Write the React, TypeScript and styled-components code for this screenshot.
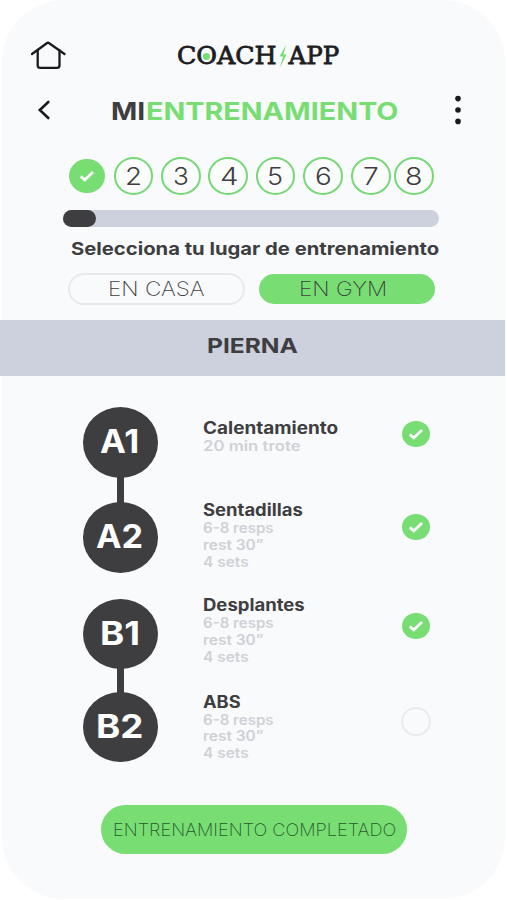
import React, { useLayoutEffect, useRef, useState } from "react";
import styled, { createGlobalStyle } from "styled-components";

const ink = "#3e3e40";
const green = "#78de74";
const lavender = "#cdd0dd";

const GlobalStyle = createGlobalStyle`
  * { box-sizing: border-box; }
  body { margin: 0; background: #fff; font-family: Inter, "Open Sans", sans-serif; color: ${ink}; }
  button { font: inherit; color: inherit; background: none; border: 0; padding: 0; }
  svg { display: block; }
`;

const FitBox = styled.span<{ $width: number }>`
  display: block;
  flex: none;
  width: ${(p) => p.$width}px;
  white-space: nowrap;
  text-align: left;
`;

const FitInner = styled.span`
  display: inline-block;
  vertical-align: top;
  transform-origin: left center;
`;

/* Stretches a line of text horizontally so that it takes a given width. */
function Fit({ width, children }: { width: number; children: React.ReactNode }) {
  const ref = useRef<HTMLSpanElement>(null);
  const [scale, setScale] = useState(1);
  useLayoutEffect(() => {
    if (ref.current) setScale(width / ref.current.offsetWidth);
  }, [width]);
  return (
    <FitBox $width={width}>
      <FitInner ref={ref} style={{ transform: `scaleX(${scale})` }}>
        {children}
      </FitInner>
    </FitBox>
  );
}

const Phone = styled.main`
  width: 503px;
  height: 899px;
  margin-left: 2px;
  border-radius: 62px;
  background: #f9fafc;
  display: flex;
  flex-direction: column;
`;

const TopBar = styled.header`
  height: 80px;
  padding: 40px 0 0 28px;
  display: flex;
  align-items: flex-start;
`;

const Logo = styled.div`
  display: flex;
  align-items: center;
  margin: 1px 0 0 109.5px;
  height: 30px;
  font: 400 24.5px/30px "DejaVu Serif", serif;
  color: #1d1d1f;
  -webkit-text-stroke: 0.8px #1d1d1f;
`;

const LetterO = styled.span`
  position: relative;
  &::after {
    content: "";
    position: absolute;
    left: calc(50% - 3.5px);
    top: calc(50% - 3px);
    width: 7px;
    height: 7px;
    border-radius: 50%;
    background: ${green};
  }
`;

const TitleBar = styled.div`
  height: 60px;
  padding: 0 43px 0 34px;
  display: flex;
  align-items: center;
`;

const Title = styled.h1`
  margin: 1px 0 0 60px;
  font-size: 24.5px;
  line-height: 30px;
  font-weight: 700;
  display: flex;
`;

const Accent = styled.span`
  color: ${green};
`;

const MoreButton = styled.button`
  margin-left: auto;
`;

const Steps = styled.nav`
  height: 70px;
  padding: 17px 0 0 66px;
  display: flex;
`;

const Step = styled.button<{ $gap: number; $done?: boolean; $shift?: number }>`
  flex: none;
  width: ${(p) => (p.$done ? 36 : 39.6)}px;
  height: ${(p) => (p.$done ? 34.5 : 37.5)}px;
  margin: ${(p) => (p.$done ? 1.5 : 0)}px 0 0 ${(p) => p.$gap}px;
  padding-left: ${(p) => p.$shift ?? 0}px;
  border-radius: 50%;
  border: ${(p) => (p.$done ? "0" : `2px solid #76d876`)};
  background: ${(p) => (p.$done ? green : "#fafdfc")};
  display: flex;
  align-items: center;
  justify-content: center;
  font-size: 24.5px;
  font-weight: 300;
  line-height: 30px;
`;

const Track = styled.div`
  flex: none;
  width: 376px;
  height: 17px;
  margin-left: 61px;
  border-radius: 9px;
  background: ${lavender};
`;

const Thumb = styled.div`
  width: 32.5px;
  height: 17px;
  border-radius: 9px;
  background: ${ink};
`;

const Prompt = styled.h2`
  margin: 11px 0 0 68.5px;
  font-size: 17.6px;
  line-height: 22px;
  font-weight: 650;
`;

const Places = styled.div`
  display: flex;
  align-items: center;
  gap: 14px;
  height: 32px;
  margin: 13px 0 15px 66px;
`;

const Place = styled.button<{ $active?: boolean }>`
  width: ${(p) => (p.$active ? 176 : 177)}px;
  height: ${(p) => (p.$active ? 30 : 32)}px;
  border-radius: 16px;
  border: ${(p) => (p.$active ? "0" : "2px solid #e8e9ec")};
  background: ${(p) => (p.$active ? green : "transparent")};
  padding-right: ${(p) => (p.$active ? 8 : 0)}px;
  display: flex;
  align-items: center;
  justify-content: center;
  font-size: 20px;
  line-height: 26px;
  font-weight: 250;
`;

const Band = styled.h2`
  flex: none;
  width: 505px;
  height: 56px;
  margin: 0 0 0 -2px;
  padding: 0 0 5px 0;
  background: ${lavender};
  display: flex;
  align-items: center;
  justify-content: center;
  font-size: 20.5px;
  line-height: 26px;
  font-weight: 680;
`;

const Exercises = styled.ul`
  list-style: none;
  margin: 31px 0 0 81px;
  padding: 0;
`;

const Row = styled.li<{ $height: number }>`
  display: grid;
  grid-template-columns: 75px 153px 30px;
  column-gap: 45px;
  height: ${(p) => p.$height}px;
`;

const Chain = styled.div`
  display: flex;
  flex-direction: column;
  align-items: center;
  height: 100%;
`;

const Node = styled.div`
  flex: none;
  width: 75px;
  height: 70.5px;
  padding-right: 2px;
  border-radius: 50%;
  background: ${ink};
  color: #fff;
  display: flex;
  align-items: center;
  justify-content: center;
  font-size: 32px;
  line-height: 40px;
  font-weight: 700;
`;

const Link = styled.div`
  flex: 1;
  width: 7px;
  margin: -1px 0;
  background: ${ink};
`;

const Info = styled.div<{ $top: number }>`
  margin-top: ${(p) => p.$top}px;
`;

const Name = styled.h3`
  margin: 0;
  font-size: 16.8px;
  line-height: 19px;
  font-weight: 650;
`;

const Detail = styled.p`
  margin: 0;
  font-size: 13.8px;
  line-height: 16.8px;
  font-weight: 600;
  color: #d0d1d6;
`;

const Status = styled.div<{ $done: boolean; $top: number }>`
  justify-self: center;
  width: ${(p) => (p.$done ? 27.5 : 30)}px;
  height: ${(p) => (p.$done ? 26 : 28.5)}px;
  margin-top: ${(p) => p.$top}px;
  border-radius: 50%;
  border: ${(p) => (p.$done ? "0" : "2px solid #e9eaec")};
  background: ${(p) => (p.$done ? green : "transparent")};
  display: flex;
  align-items: center;
  justify-content: center;
`;

const Finish = styled.button`
  flex: none;
  width: 306px;
  height: 48.5px;
  margin: 43px 0 0 99px;
  padding-top: 1px;
  border-radius: 24.5px;
  background: ${green};
  color: #28592c;
  display: flex;
  align-items: center;
  justify-content: center;
  font-size: 16.8px;
  line-height: 22px;
  font-weight: 250;
`;

const Check = () => (
  <svg width="16" height="14" viewBox="0 0 16 14" fill="none" stroke="#fff" strokeWidth="2.8">
    <path d="M1.8 7.4 L5.8 10.9 L14 3" />
  </svg>
);

const steps = [
  { n: 2, gap: 9, w: 17, shift: 0 },
  { n: 3, gap: 8, w: 16, shift: 1 },
  { n: 4, gap: 7.7, w: 18, shift: 2 },
  { n: 5, gap: 7.9, w: 16.5, shift: 0 },
  { n: 6, gap: 7.9, w: 17, shift: 0 },
  { n: 7, gap: 8, w: 16, shift: 1 },
  { n: 8, gap: 3.6, w: 17.5, shift: 0 },
];

const sets: [string, number][] = [["6-8 resps", 71], ["rest 30”", 60.5], ["4 sets", 46]];

const exercises: {
  id: string; idW: number; name: string; nameW: number; details: [string, number][];
  done: boolean; height: number; top: number; statusTop: number; linked: boolean;
}[] = [
  { id: "A1", idW: 39, name: "Calentamiento", nameW: 135.5, details: [["20 min trote", 97]], done: true, height: 95, top: 12, statusTop: 13.5, linked: true },
  { id: "A2", idW: 47, name: "Sentadillas", nameW: 100, details: sets, done: true, height: 96.5, top: -1, statusTop: 12, linked: false },
  { id: "B1", idW: 40, name: "Desplantes", nameW: 101.5, details: sets, done: true, height: 93, top: -2.5, statusTop: 14, linked: true },
  { id: "B2", idW: 47, name: "ABS", nameW: 38, details: sets, done: false, height: 70.5, top: 1, statusTop: 15.5, linked: false },
];

export default function App() {
  return (
    <>
      <GlobalStyle />
      <Phone>
        <TopBar>
          <svg width="37" height="31" viewBox="0 0 37 31" fill="none" stroke="#1b1b1d" strokeWidth="2.3" strokeLinecap="round" strokeLinejoin="round">
            <path d="M2 14 L16.8 3.2 Q18 2.2 19.2 3.2 L34.5 14" />
            <path d="M7.7 10.5 V25.2 Q7.7 27.9 10.4 27.9 H26.8 Q29.5 27.9 29.5 25.2 V10.5" />
          </svg>
          <Logo>
            <Fit width={100}>C<LetterO>O</LetterO>ACH</Fit>
            <svg width="12" height="24" viewBox="0 0 12 24" fill={green}>
              <path d="M9 1 L2.5 12.5 H6 L3 23.5 L9.5 10.5 H6.4 Z" />
            </svg>
            <Fit width={51}>APP</Fit>
          </Logo>
        </TopBar>
        <TitleBar>
          <svg width="15" height="22" viewBox="0 0 15 22" fill="none" stroke="#1b1b1d" strokeWidth="2.6" strokeLinecap="round">
            <path d="M12.3 3 L3.8 11 L12.3 19" />
          </svg>
          <Title>
            <Fit width={34.5}>MI</Fit>
            <Accent><Fit width={253}>ENTRENAMIENTO</Fit></Accent>
          </Title>
          <MoreButton aria-label="Más opciones">
            <svg width="8" height="30" viewBox="0 0 8 30" fill="#1b1b1d">
              <circle cx="4" cy="3.6" r="2.8" />
              <circle cx="4" cy="15" r="2.8" />
              <circle cx="4" cy="26.4" r="2.8" />
            </svg>
          </MoreButton>
        </TitleBar>
        <Steps>
          <Step $gap={0.5} $done aria-label="1"><Check /></Step>
          {steps.map((s) => (
            <Step key={s.n} $gap={s.gap} $shift={s.shift}><Fit width={s.w}>{s.n}</Fit></Step>
          ))}
        </Steps>
        <Track><Thumb /></Track>
        <Prompt><Fit width={368}>Selecciona tu lugar de entrenamiento</Fit></Prompt>
        <Places>
          <Place><Fit width={97}>EN CASA</Fit></Place>
          <Place $active><Fit width={88}>EN GYM</Fit></Place>
        </Places>
        <Band><Fit width={91}>PIERNA</Fit></Band>
        <Exercises>
          {exercises.map((e) => (
            <Row key={e.id} $height={e.height}>
              <Chain>
                <Node><Fit width={e.idW}>{e.id}</Fit></Node>
                {e.linked && <Link />}
              </Chain>
              <Info $top={e.top}>
                <Name><Fit width={e.nameW}>{e.name}</Fit></Name>
                {e.details.map(([text, w]) => (
                  <Detail key={text}><Fit width={w}>{text}</Fit></Detail>
                ))}
              </Info>
              <Status $done={e.done} $top={e.statusTop}>{e.done && <Check />}</Status>
            </Row>
          ))}
        </Exercises>
        <Finish><Fit width={283}>ENTRENAMIENTO COMPLETADO</Fit></Finish>
      </Phone>
    </>
  );
}
